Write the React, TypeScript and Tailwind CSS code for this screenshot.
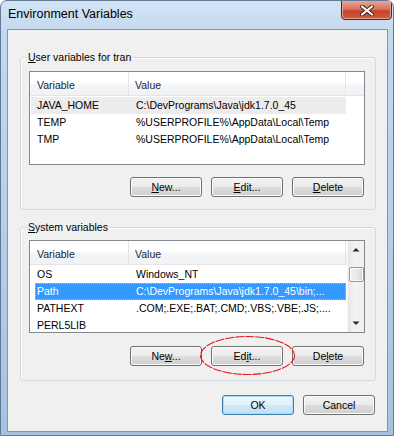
import React from 'react';

type Row = { name: string; value: string; state?: 'focus' | 'dim' };

const userVars: Row[] = [
  { name: 'JAVA_HOME', value: 'C:\\DevPrograms\\Java\\jdk1.7.0_45', state: 'dim' },
  { name: 'TEMP', value: '%USERPROFILE%\\AppData\\Local\\Temp' },
  { name: 'TMP', value: '%USERPROFILE%\\AppData\\Local\\Temp' },
];

const systemVars: Row[] = [
  { name: 'OS', value: 'Windows_NT' },
  { name: 'Path', value: 'C:\\DevPrograms\\Java\\jdk1.7.0_45\\bin;...', state: 'focus' },
  { name: 'PATHEXT', value: '.COM;.EXE;.BAT;.CMD;.VBS;.VBE;.JS;....' },
  { name: 'PERL5LIB', value: '' },
];

function Btn({ children, isDefault }: { children: React.ReactNode; isDefault?: boolean }) {
  return (
    <button
      type="button"
      className={
        isDefault
          ? 'w-[72px] h-[20px] rounded-[3px] border border-[#3c7fb1] shadow-[inset_0_0_0_1px_#a8ddf5] bg-[linear-gradient(#eef7fc_0%,#e2f1fb_50%,#d1e9f8_50%,#c2e0f4_100%)] leading-[18px] text-center'
          : 'w-[72px] h-[20px] rounded-[3px] border border-[#707070] shadow-[inset_0_0_0_1px_#fbfbfb] bg-[linear-gradient(#f2f2f2_0%,#ebebeb_50%,#dddddd_50%,#cfcfcf_100%)] leading-[18px] text-center'
      }
    >
      {children}
    </button>
  );
}

function Header({ full }: { full?: boolean }) {
  return (
    <div className="flex h-[24px] border-b border-[#e2e4e7] bg-[linear-gradient(#ffffff_0%,#ffffff_45%,#f4f5f7_55%,#f1f2f4_100%)] text-[#1b2535] leading-[22px] pt-[2px]">
      <div className="w-[99px] pl-[7px] border-r border-[#e3e5e9] -mt-[2px] pt-[2px]">Variable</div>
      <div className="w-[217px] pl-[6px] border-r border-[#e3e5e9] -mt-[2px] pt-[2px]">Value</div>
      {full && <div className="flex-1" />}
    </div>
  );
}

function Rows({ rows, inset }: { rows: Row[]; inset: 'narrow' | 'wide' }) {
  return (
    <div className="mt-[1px] flex flex-col">
      {rows.map((r) => (
        <div
          key={r.name}
          className={
            (inset === 'narrow' ? 'ml-[1px] w-[315px] ' : 'ml-[5px] w-[311px] ') +
            'flex h-[17px] leading-[17px] whitespace-nowrap ' +
            (r.state === 'focus'
              ? 'bg-[#3399ff] text-white outline-1 outline-dotted outline-[#e8b860] -outline-offset-1'
              : r.state === 'dim'
              ? 'bg-[#ececec]'
              : '')
          }
        >
          <div className={inset === 'narrow' ? 'w-[98px] pl-[6px]' : 'w-[94px] pl-[2px]'}>{r.name}</div>
          <div className="pl-[7px] overflow-hidden">{r.value}</div>
        </div>
      ))}
    </div>
  );
}

function ScrollBar() {
  return (
    <div className="w-[17px] flex flex-col bg-[linear-gradient(90deg,#e6e6e6,#f3f3f3_40%,#f0f0f0)] border-l border-[#f7f7f7]">
      <div className="h-[17px] flex items-center justify-center">
        <svg width="8" height="5" viewBox="0 0 8 5">
          <path d="M0.5 4.5 L4 1 L7.5 4.5 Z" fill="#2b2b2b" />
        </svg>
      </div>
      <div className="mt-[9px] ml-[1px] w-[15px] h-[15px] rounded-[2px] border border-[#979797] shadow-[inset_0_0_0_1px_#fafafa] bg-[linear-gradient(90deg,#f2f2f2,#e8e8e8_50%,#d6d6d6)]" />
      <div className="flex-1" />
      <div className="h-[17px] flex items-center justify-center">
        <svg width="8" height="5" viewBox="0 0 8 5">
          <path d="M0.5 0.5 L4 4 L7.5 0.5 Z" fill="#2b2b2b" />
        </svg>
      </div>
    </div>
  );
}

function Group({ label, children, className }: { label: React.ReactNode; children: React.ReactNode; className: string }) {
  return (
    <div className={'relative ml-[12px] w-[356px] rounded-[3px] border border-[#cfd9e1] shadow-[inset_1px_1px_0_#ffffff] ' + className}>
      <span className="absolute -top-[8px] left-[6px] px-[1px] bg-[#f0f0f0] leading-[14px]">{label}</span>
      {children}
    </div>
  );
}

export default function App() {
  return (
    <div className="relative w-[394px] h-[436px] overflow-hidden rounded-t-[7px] border border-[#5f7b98] bg-[linear-gradient(180deg,#d3e3f3_0%,#c3d8ee_8%,#b7cfe9_50%,#a7c2e0_100%)] font-['Liberation_Sans',Arial,sans-serif] text-[10.5px] text-black select-none">
      {/* Title bar */}
      <div className="flex h-[28px]">
        <span className="pl-[7px] pt-[6px] text-[12.5px] leading-[14px] text-black">Environment Variables</span>
        <div className="ml-auto mr-[1px] -mt-[1px] w-[51px] h-[20px] rounded-b-[4px] border border-[#53211a] shadow-[inset_0_0_0_1px_#e9a292] bg-[linear-gradient(#e7a696_0%,#d9725d_45%,#c5432b_55%,#d0603f_100%)] flex items-center justify-center">
          <svg width="14" height="11" viewBox="0 0 14 11">
            <path d="M2 1.5 L12 9.5 M12 1.5 L2 9.5" stroke="#3c2420" strokeWidth="4" strokeLinecap="round" />
            <path d="M2 1.5 L12 9.5 M12 1.5 L2 9.5" stroke="#ffffff" strokeWidth="2.2" strokeLinecap="round" />
          </svg>
        </div>
      </div>

      {/* Client area */}
      <div className="ml-[6px] w-[381px] h-[403px] border border-[#8196ad] bg-[#f0f0f0] flex flex-col">
        <Group
          className="mt-[27px] pb-[12px]"
          label={
            <>
              <u>U</u>ser variables for tran
            </>
          }
        >
          <div className="ml-[8px] mt-[13px] w-[336px] h-[94px] border border-[#828790] bg-white overflow-hidden">
            <Header full />
            <Rows rows={userVars} inset="narrow" />
          </div>
          <div className="mt-[12px] pr-[11px] flex justify-end gap-[9px]">
            <Btn>
              <u>N</u>ew...
            </Btn>
            <Btn>
              <u>E</u>dit...
            </Btn>
            <Btn>
              <u>D</u>elete
            </Btn>
          </div>
        </Group>

        <Group
          className="mt-[17px] pb-[14px]"
          label={
            <>
              <u>S</u>ystem variables
            </>
          }
        >
          <div className="ml-[8px] mt-[12px] w-[336px] h-[93px] border border-[#828790] bg-white overflow-hidden flex">
            <div className="w-[317px] flex flex-col">
              <Header />
              <Rows rows={systemVars} inset="wide" />
            </div>
            <ScrollBar />
          </div>
          <div className="mt-[13px] pr-[11px] flex justify-end gap-[9px]">
            <Btn>
              Ne<u>w</u>...
            </Btn>
            <Btn>
              Ed<u>i</u>t...
            </Btn>
            <Btn>
              De<u>l</u>ete
            </Btn>
          </div>
        </Group>

        <div className="mt-[14px] pr-[12px] flex justify-end gap-[9px]">
          <Btn isDefault>OK</Btn>
          <Btn>Cancel</Btn>
        </div>
      </div>

      {/* Red annotation around Edit */}
      <svg className="absolute left-[198px] top-[334px] pointer-events-none" width="98" height="41" viewBox="0 0 98 41">
        <ellipse cx="48.5" cy="20.5" rx="47" ry="19" fill="none" stroke="#e8141c" strokeWidth="1.1" strokeDasharray="9 1" />
      </svg>
    </div>
  );
}
